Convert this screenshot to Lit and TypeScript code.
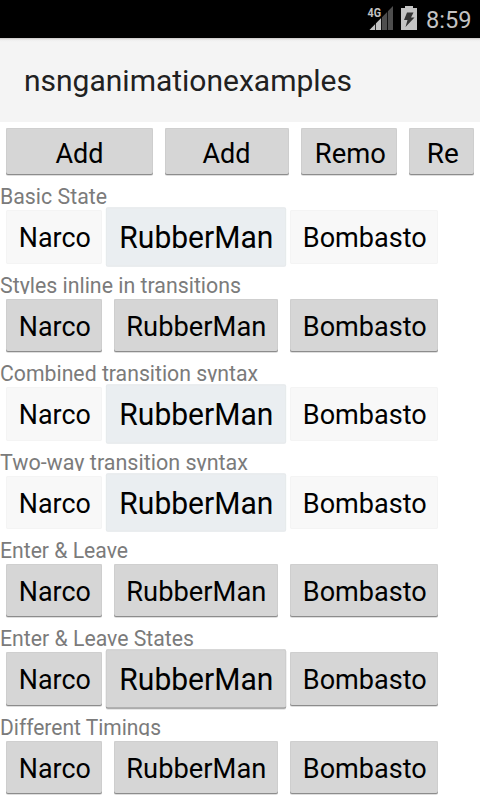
import { LitElement, html, css } from "lit";
import { customElement, property } from "lit/decorators.js";

type Look = "solid" | "state" | "scaled";

interface Section {
  title: string;
  look: Look;
  height: number;
  button: number;
  span: number;
}

const SECTIONS: Section[] = [
  { title: "Basic State", look: "state", height: 89, button: 54, span: 107 },
  { title: "Styles inline in transitions", look: "solid", height: 88, button: 53, span: 241 },
  { title: "Combined transition syntax", look: "state", height: 89, button: 54, span: 258 },
  { title: "Two-way transition syntax", look: "state", height: 88, button: 53, span: 248 },
  { title: "Enter & Leave", look: "solid", height: 88, button: 53, span: 128 },
  { title: "Enter & Leave States", look: "scaled", height: 89, button: 54, span: 194 },
  { title: "Different Timings", look: "solid", height: 88, button: 53, span: 161 },
];

@customElement("status-bar")
class StatusBar extends LitElement {
  static styles = css`
    :host {
      display: flex;
      justify-content: flex-end;
      height: 38px;
      background: #000;
    }
    .icons, .clock { display: block; flex: none; }
    .net { font: 700 13px Roboto, sans-serif; fill: #c3c3c3; }
    .clock { font: 24px Roboto, sans-serif; fill: #c3c3c3; }
  `;
  render() {
    return html`
      <svg class="icons" width="58" height="38" viewBox="0 0 58 38">
        <path d="M26 6V30H2.500Z" fill="#4e4e4e" />
        <path d="M14 18.300V30H2.500Z" fill="#c3c3c3" />
        <path d="M8.500 18V30M14.500 12V30M20.500 8V30" stroke="#000" stroke-width="0.800" />
        <path d="M0 5H14V18H0Z" fill="#000" />
        <text class="net" x="0.500" y="17.300" textLength="13.500" lengthAdjust="spacingAndGlyphs">4G</text>
        <path d="M38 6h8v2h4v22H34V8h4z" fill="#c3c3c3" />
        <path d="M40 12.500h6.500l-2.500 5h3.500l-9 9.500 2-7h-3.500z" fill="#333" />
      </svg>
      <svg class="clock" width="55" height="38">
        <text x="1" y="28" textLength="45.500" lengthAdjust="spacingAndGlyphs">8:59</text>
      </svg>
    `;
  }
}

@customElement("raised-button")
class RaisedButton extends LitElement {
  @property() label = "";
  @property({ type: Number }) span = 0;
  @property({ type: Number }) baseline = 37;
  static styles = css`
    :host { display: block; flex: none; }
    .face {
      display: flex;
      justify-content: center;
      align-items: flex-start;
      width: 100%;
      height: 100%;
      border-radius: 2px;
      background: var(--face, #d6d6d6);
      box-shadow: var(--edge, inset 0 -1px 0 #8c8c8c, inset 0 1px 0 #cfcfcf, inset 1px 0 0 #cecece, inset -1px 0 0 #cecece, 0 1px 0 rgba(0, 0, 0, 0.13));
    }
    .text { display: block; overflow: visible; font: 28px Roboto, sans-serif; fill: #000; }
  `;
  render() {
    return html`<div class="face">
      <svg class="text" width=${this.span} height="47">
        <text x=${this.label === "Add" ? -0.5 : this.label === "RubberMan" ? 0.3 : 0.8} y=${this.baseline} textLength=${this.span} lengthAdjust="spacingAndGlyphs">${this.label}</text>
      </svg>
    </div>`;
  }
}

@customElement("app-root")
class AppRoot extends LitElement {
  static styles = css`
    :host {
      display: flex;
      flex-direction: column;
      width: 480px;
      height: 800px;
      overflow: hidden;
      background: #fff;
    }
    .title {
      height: 84px;
      flex: none;
      background: linear-gradient(#c9c7c5, #eeeeee 2px, #f4f4f4 4px);
    }
    .heading { display: block; font: 30px Roboto, sans-serif; fill: #212121; }
    .bar { display: flex; flex: none; gap: 12px; height: 47px; padding: 6px 6px 9px; }
    .section { flex: none; }
    .label { display: block; height: 21px; margin-bottom: -1px; overflow: hidden; font: 21.5px Roboto, sans-serif; fill: #7b7b7b; }
    .row { display: flex; gap: 12px; padding: 6px 6px 0; }
    .w0 { width: 147px; } .w1 { width: 124px; } .w2 { width: 96px; } .w3 { width: 65px; }
    .narco { width: 96px; } .rubber { width: 164px; } .bomb { width: 148px; }
    .flat { --face: #f8f8f8; --edge: inset 0 0 0 1px #f4f4f4; }
    .tint { --face: #eaeef1; --edge: inset 0 0 0 1px #e7eaec; }
    .grow { transform: scale(1.1); }
  `;
  private section(s: Section) {
    const flat = s.look === "state" ? "flat" : "";
    const mid = s.look === "state" ? "tint grow" : s.look === "scaled" ? "grow" : "";
    return html`<div class="section" style="height:${s.height}px">
      <svg class="label" width="300" height="21">
        <text x="0" y="20" textLength=${s.span} lengthAdjust="spacingAndGlyphs">${s.title}</text>
      </svg>
      <div class="row" style="height:${s.button}px">
        <raised-button class="narco ${flat}" label="Narco" span="72"></raised-button>
        <raised-button class="rubber ${mid}" label="RubberMan" span="140"></raised-button>
        <raised-button class="bomb ${flat}" label="Bombasto" span="124"></raised-button>
      </div>
    </div>`;
  }
  render() {
    return html`
      <status-bar></status-bar>
      <div class="title">
        <svg class="heading" width="480" height="84">
          <text x="24" y="53" textLength="328" lengthAdjust="spacingAndGlyphs">nsnganimationexamples</text>
        </svg>
      </div>
      <div class="bar">
        <raised-button class="w0" label="Add" span="48" baseline="35"></raised-button>
        <raised-button class="w1" label="Add" span="48" baseline="35"></raised-button>
        <raised-button class="w2" label="Remo" span="71" baseline="35"></raised-button>
        <raised-button class="w3" label="Re" span="32" baseline="35"></raised-button>
      </div>
      ${SECTIONS.map((s) => this.section(s))}
    `;
  }
}
